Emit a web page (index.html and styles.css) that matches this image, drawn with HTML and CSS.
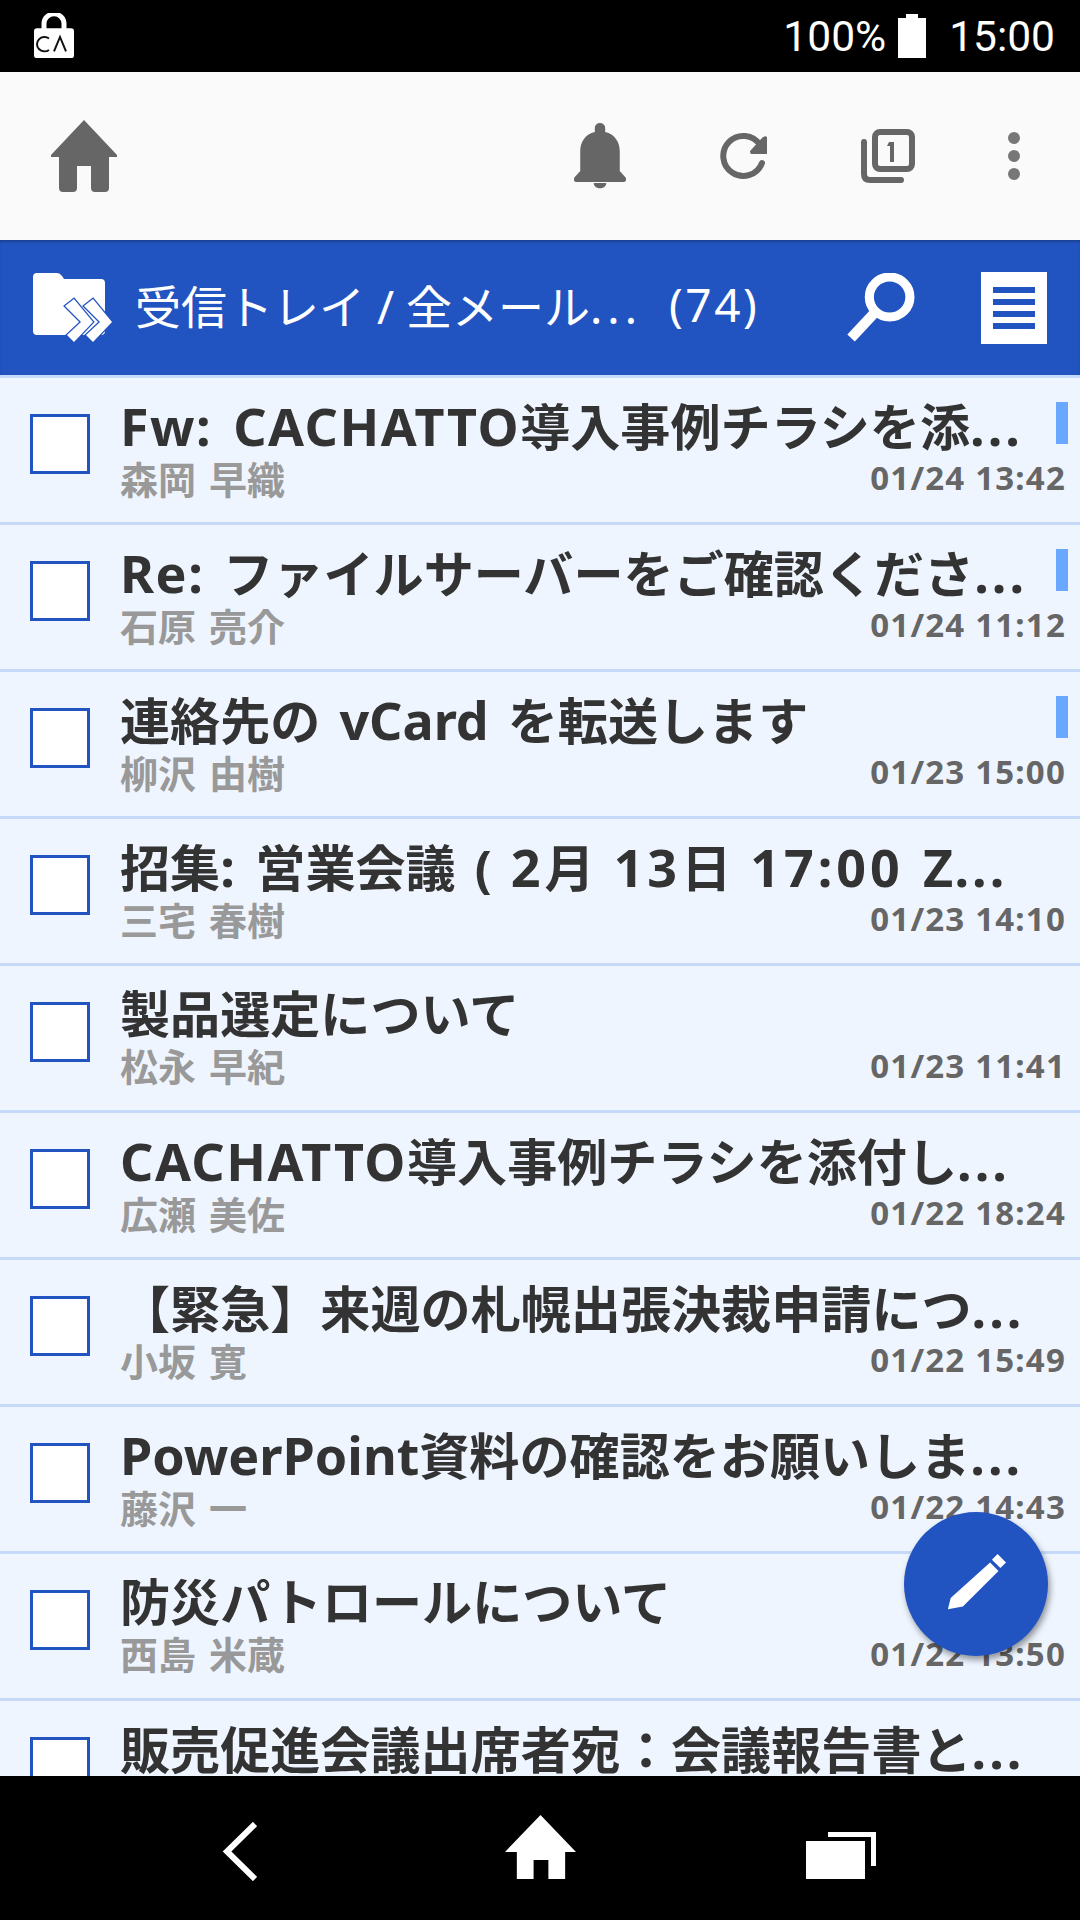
FILE: index.html
```html
<!DOCTYPE html>
<html lang="ja">

<head>
  <meta charset="UTF-8"/>
  <title>受信トレイ</title>

  <link rel="stylesheet" href="styles.css">
</head>

<body>
<div class="screen">
  <div class="status">
    <svg class="status-lock" width="42" height="46" viewBox="0 0 42 48" preserveAspectRatio="none">
      <path d="M11 17V11a10 10 0 0 1 20 0v6" fill="none" stroke="#fff" stroke-width="5"/>
      <rect x="1" y="16" width="40" height="31" rx="3" fill="#fff"/>
      <path d="M16 26.500a7.500 7.500 0 1 0 0 12" fill="none" stroke="#111" stroke-width="2"/>
      <path d="M21 40l6-15 6 15" fill="none" stroke="#111" stroke-width="2"/>
    </svg>
    <span class="status-pct">100%</span>
    <svg class="status-batt" width="28" height="44" viewBox="0 0 28 44">
      <path d="M8 0h12v4h8v40H0V4h8z" fill="#fff"/>
    </svg>
    <span class="status-time">15:00</span>
  </div>

  <div class="toolbar">
    <svg class="tool-home" width="66" height="72" viewBox="0 0 66 72">
      <path d="M33 0L66 35v2H58V68q0 4-4 4H44q-4 0-4-4V46H26V68q0 4-4 4H12q-4 0-4-4V37H0v-2z" fill="#666"/>
    </svg>
    <div class="tool-right">
      <div class="tool-slot">
        <svg width="52" height="66" viewBox="0 0 50 66" preserveAspectRatio="none">
          <path d="M25 0a5 5 0 0 1 5 5v4c9 2 14 10 14 19v20l6 7v2q0 2-2 2H2q-2 0-2-2v-2l6-7V28C6 19 11 11 20 9V5a5 5 0 0 1 5-5z" fill="#666"/>
          <path d="M19 60h12c0 7-12 7-12 0z" fill="#666"/>
        </svg>
      </div>
      <div class="tool-slot">
        <svg width="48" height="48" viewBox="0 0 48 48">
          <path d="M40 13A20 20 0 1 0 42 31" fill="none" stroke="#666" stroke-width="6" stroke-linecap="round"/>
          <path d="M47 5V22H31q-2-3 0-4L42 6q3-3 5-1z" fill="#666"/>
        </svg>
      </div>
      <div class="tool-slot">
        <svg width="54" height="54" viewBox="0 0 54 54">
          <path d="M3 13V45q0 6 6 6H40" fill="none" stroke="#666" stroke-width="6" stroke-linecap="round"/>
          <rect x="14" y="3" width="37" height="37" rx="5" fill="none" stroke="#666" stroke-width="6"/>
          <path d="M28 13h5v20h-4V17h-3z" fill="#666"/>
        </svg>
      </div>
      <div class="tool-dots">
        <span></span><span></span><span></span>
      </div>
    </div>
  </div>

  <div class="header">
    <svg class="head-folder" width="79" height="69" viewBox="0 0 79 69">
      <path d="M4 0H24q3 0 5 3l2 3H68q4 0 4 4V58q0 4-4 4H4q-4 0-4-4V4q0-4 4-4z" fill="#fff"/>
      <path d="M32 33L41 26 60 49 41 69 34 62 48 49zM51 33L60 26 79 49 60 69 53 62 67 49z" fill="#fff" stroke="#2254c1" stroke-width="2.500" paint-order="stroke"/>
    </svg>
    <span class="head-title">受信トレイ / 全メール<span class="dots">...</span></span>
    <span class="head-count">(74)</span>
    <svg class="head-search" width="69" height="70" viewBox="0 0 68 70" preserveAspectRatio="none">
      <circle cx="43" cy="24" r="20" fill="none" stroke="#fff" stroke-width="9"/>
      <path d="M28 40L5 65" fill="none" stroke="#fff" stroke-width="10"/>
    </svg>
    <div class="head-menu"><span></span><span></span><span></span><span></span></div>
  </div>

  <div class="list">
    <div class="row">
      <div class="check"></div>
      <div class="body">
        <div class="title"><span class="lat caps">Fw: CACHATTO</span>導入事例チラシを添<span class="dots">...</span></div>
        <div class="name">森岡 早織</div>
      </div>
      <div class="unread"></div>
      <div class="date">01/24 13:42</div>
    </div>
    <div class="row">
      <div class="check"></div>
      <div class="body">
        <div class="title"><span class="lat caps">Re:</span> ファイルサーバーをご確認くださ<span class="dots">...</span></div>
        <div class="name">石原 亮介</div>
      </div>
      <div class="unread"></div>
      <div class="date">01/24 11:12</div>
    </div>
    <div class="row">
      <div class="check"></div>
      <div class="body">
        <div class="title">連絡先の <span class="lat">vCard</span> を転送します</div>
        <div class="name">柳沢 由樹</div>
      </div>
      <div class="unread"></div>
      <div class="date">01/23 15:00</div>
    </div>
    <div class="row">
      <div class="check"></div>
      <div class="body">
        <div class="title">招集<span class="lat caps">:</span> 営業会議 ( <span class="num">2</span>月 <span class="num">13</span>日 <span class="num">17:00</span> <span class="lat caps">Z</span><span class="dots">...</span></div>
        <div class="name">三宅 春樹</div>
      </div>
      <div class="date">01/23 14:10</div>
    </div>
    <div class="row">
      <div class="check"></div>
      <div class="body">
        <div class="title">製品選定について</div>
        <div class="name">松永 早紀</div>
      </div>
      <div class="date">01/23 11:41</div>
    </div>
    <div class="row">
      <div class="check"></div>
      <div class="body">
        <div class="title"><span class="lat caps">CACHATTO</span>導入事例チラシを添付し<span class="dots">...</span></div>
        <div class="name">広瀬 美佐</div>
      </div>
      <div class="date">01/22 18:24</div>
    </div>
    <div class="row">
      <div class="check"></div>
      <div class="body">
        <div class="title">【緊急】来週の札幌出張決裁申請につ<span class="dots">...</span></div>
        <div class="name">小坂 寛</div>
      </div>
      <div class="date">01/22 15:49</div>
    </div>
    <div class="row">
      <div class="check"></div>
      <div class="body">
        <div class="title"><span class="lat">PowerPoint</span>資料の確認をお願いしま<span class="dots">...</span></div>
        <div class="name">藤沢 一</div>
      </div>
      <div class="date">01/22 14:43</div>
    </div>
    <div class="row">
      <div class="check"></div>
      <div class="body">
        <div class="title">防災パトロールについて</div>
        <div class="name">西島 米蔵</div>
      </div>
      <div class="date">01/22 13:50</div>
    </div>
    <div class="row">
      <div class="check"></div>
      <div class="body">
        <div class="title">販売促進会議出席者宛：会議報告書と<span class="dots">...</span></div>
      </div>
    </div>
  </div>

  <div class="fab">
    <svg width="60" height="60" viewBox="0 0 64 64">
      <path d="M45 10L54 19 16 57 0 60 3 48z" fill="#fff" transform="translate(2 -1)"/>
      <path d="M49 6L55 0 64 9 58 15z" fill="#fff"/>
    </svg>
  </div>

  <div class="navbar">
    <svg class="nav-back" width="35" height="59" viewBox="0 0 35 59">
      <path d="M33 2L5 29.500 33 57" fill="none" stroke="#fff" stroke-width="6"/>
    </svg>
    <svg class="nav-home" width="71" height="64" viewBox="0 0 72 64" preserveAspectRatio="none">
      <path d="M36 0L72 37H61V64H44V45H29V64H12V37H0z" fill="#fff"/>
    </svg>
    <svg class="nav-recent" width="70" height="47" viewBox="0 0 70 47">
      <path d="M0 9H59V47H0z" fill="#fff"/>
      <path d="M22 2.500H67.500V34" fill="none" stroke="#fff" stroke-width="5"/>
    </svg>
  </div>
</div>
</body>

</html>
```

FILE: styles.css
```css
body {
    margin: 0;
    font-family: "Noto Sans", "Noto Sans CJK JP", sans-serif;
}

.screen {
    position: relative;
    width: 1080px;
    height: 1920px;
    display: flex;
    flex-direction: column;
    overflow: hidden;
    background-color: #eef5ff;
}

/* status bar */
.status {
    height: 72px;
    flex: none;
    display: flex;
    align-items: center;
    background-color: #000;
    color: #fff;
    font-family: Roboto, sans-serif;
    font-size: 42.500px;
    padding-left: 33px;
    padding-right: 25px;
    box-sizing: border-box;
}

.status-lock {
    margin-right: auto;
}

.status-batt {
    margin-left: 12px;
    margin-right: 23px;
}

/* top toolbar */
.toolbar {
    height: 168px;
    flex: none;
    display: flex;
    align-items: center;
    justify-content: space-between;
    background-color: #fafafa;
    padding-left: 51px;
    padding-right: 12px;
}

.tool-right {
    display: flex;
    align-items: center;
}

.tool-slot {
    width: 144px;
    display: flex;
    justify-content: center;
}

.tool-dots {
    width: 108px;
    display: flex;
    flex-direction: column;
    align-items: center;
    gap: 6px;
}

.tool-dots span {
    width: 12px;
    height: 12px;
    border-radius: 50%;
    background-color: #777;
}

/* folder header */
.header {
    height: 135px;
    flex: none;
    display: flex;
    align-items: center;
    background-color: #2254c1;
    box-shadow: inset 0 3px 3px -1px #1b4294;
    color: #fff;
    font-size: 46px;
    padding-left: 33px;
}

.head-folder {
    margin-right: 23px;
}

.head-title {
    margin-bottom: 8px;
}

.head-title .dots {
    letter-spacing: 5px;
}

.head-count {
    margin-left: 27px;
    margin-bottom: 8px;
    letter-spacing: 2.500px;
}

.head-search {
    margin-left: auto;
}

.head-menu {
    width: 66px;
    height: 72px;
    background-color: #fff;
    margin-left: 66px;
    margin-right: 33px;
    display: flex;
    flex-direction: column;
    justify-content: center;
    align-items: center;
    gap: 6px;
}

.head-menu span {
    width: 42px;
    height: 6px;
    background-color: #2254c1;
}

/* mail list */
.list {
    flex: 1;
    overflow: hidden;
    border-top: 3px solid #c5daf8;
}

.row {
    position: relative;
    height: 144px;
    border-bottom: 3px solid #c5daf8;
    display: flex;
    align-items: flex-start;
    padding-left: 30px;
}

.check {
    flex: none;
    width: 54px;
    height: 54px;
    margin-top: 36px;
    border: 3px solid #2254c1;
    background-color: #fff;
}

.body {
    margin-left: 30px;
    white-space: nowrap;
}

.title {
    color: #333;
    font-size: 50.100px;
    font-weight: 700;
    line-height: 60px;
    margin-top: 18px;
    word-spacing: 6px;
}

.title .lat {
    font-size: 52px;
}

.title .caps {
    letter-spacing: 1.500px;
}

.title .num {
    font-size: 52px;
    letter-spacing: 4px;
}

.title .dots {
    font-size: 52px;
    letter-spacing: 3px;
}

.name {
    color: #999;
    font-size: 38px;
    font-weight: 700;
    line-height: 44px;
    word-spacing: 3px;
}

.unread {
    position: absolute;
    right: 12px;
    top: 24px;
    width: 12px;
    height: 42px;
    background-color: #6aa8ff;
}

.date {
    position: absolute;
    right: 14px;
    top: 78px;
    color: #666;
    font-size: 33px;
    font-weight: 700;
    line-height: 44px;
    letter-spacing: 1.200px;
}

/* compose button */
.fab {
    position: absolute;
    left: 904px;
    top: 1512px;
    width: 144px;
    height: 144px;
    border-radius: 50%;
    background-color: #2254c1;
    box-shadow: 2px 4px 6px rgba(0, 0, 0, 0.4);
    display: flex;
    align-items: center;
    justify-content: center;
}

/* android nav bar */
.navbar {
    height: 144px;
    flex: none;
    display: flex;
    align-items: flex-start;
    background-color: #000;
    padding-top: 39px;
    box-sizing: border-box;
}

.nav-back {
    margin-left: 222px;
    margin-top: 7px;
}

.nav-home {
    margin-left: 248px;
}

.nav-recent {
    margin-left: 230px;
    margin-top: 17px;
}
```
